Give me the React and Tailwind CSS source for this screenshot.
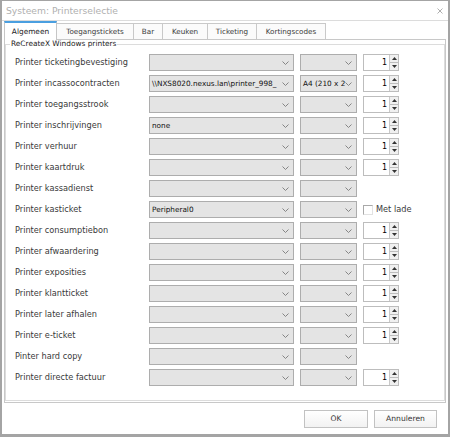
import React from "react";

const rows = [
  { label: "Printer ticketingbevestiging", extra: "spin" },
  { label: "Printer incassocontracten", c1: "\\\\NXS8020.nexus.lan\\printer_998_", c2: "A4 (210 x 2", extra: "spin" },
  { label: "Printer toegangsstrook", extra: "spin" },
  { label: "Printer inschrijvingen", c1: "none", extra: "spin" },
  { label: "Printer verhuur", extra: "spin" },
  { label: "Printer kaartdruk", extra: "spin" },
  { label: "Printer kassadienst" },
  { label: "Printer kasticket", c1: "Peripheral0", extra: "check" },
  { label: "Printer consumptiebon", extra: "spin" },
  { label: "Printer afwaardering", extra: "spin" },
  { label: "Printer exposities", extra: "spin" },
  { label: "Printer klantticket", extra: "spin" },
  { label: "Printer later afhalen", extra: "spin" },
  { label: "Printer e-ticket", extra: "spin" },
  { label: "Pinter hard copy" },
  { label: "Printer directe factuur", extra: "spin" },
];

const tabs = [
  { name: "Toegangstickets", w: "w-[77px]" },
  { name: "Bar", w: "w-[29px]" },
  { name: "Keuken", w: "w-[45px]" },
  { name: "Ticketing", w: "w-[49px]" },
  { name: "Kortingscodes", w: "w-[69px]" },
];

function Chevron() {
  return (
    <svg width="7" height="4" viewBox="0 0 7 4" className="block">
      <polyline points="0.5,0.5 3.5,3.5 6.5,0.5" fill="none" stroke="#858585" strokeWidth="1" />
    </svg>
  );
}

function Combo({ w, text }) {
  return (
    <div className={`${w} h-[17px] shrink-0 border border-[#adadad] bg-[#e4e4e4] flex items-center`}>
      <div className="flex-1 min-w-0 whitespace-nowrap pl-[2px] text-[7.3px] leading-[10px] text-[#111]">
        {text || ""}
      </div>
      <div className="w-[11px] shrink-0 h-full flex items-center justify-start">
        <Chevron />
      </div>
    </div>
  );
}

function Spinner() {
  return (
    <div className="ml-[6px] w-[36px] h-[17px] shrink-0 border border-[#bdbdbd] bg-white flex">
      <div className="flex-1 flex items-center justify-end pr-[2px] text-[8px] leading-none text-black">1</div>
      <div className="w-[9px] flex flex-col border-l border-[#c9c9c9] bg-[#f0f0f0]">
        <div className="flex-1 flex items-center justify-center border-b border-[#bdbdbd]">
          <svg width="5" height="3" viewBox="0 0 5 3" className="block">
            <polygon points="2.5,0 5,3 0,3" fill="#333" />
          </svg>
        </div>
        <div className="flex-1 flex items-center justify-center">
          <svg width="5" height="3" viewBox="0 0 5 3" className="block">
            <polygon points="0,0 5,0 2.5,3" fill="#333" />
          </svg>
        </div>
      </div>
    </div>
  );
}

function Check() {
  return (
    <div className="ml-[6px] flex items-center">
      <div className="w-[10px] h-[10px] border-t border-l border-[#a9a9a9] border-r border-b border-r-[#e2e2e2] border-b-[#e2e2e2] bg-white" />
      <span className="ml-[3px] text-[8.2px] leading-none text-[#3a3a3a]">Met lade</span>
    </div>
  );
}

export default function App() {
  return (
    <div className="w-[450px] h-[437px] box-border bg-white border-l-2 border-r-2 border-t border-b-[3px] border-[#a4a4a4] flex flex-col font-['DejaVu_Sans',sans-serif] overflow-hidden">
      {/* Title bar */}
      <div className="h-[20px] shrink-0 border-b border-[#dcdcdc] flex items-center justify-between pl-[4px] pr-[5px]">
        <span className="text-[9.2px] leading-none text-[#b0b0b0]">Systeem: Printerselectie</span>
        <svg width="6" height="6" viewBox="0 0 6 6" className="block">
          <line x1="0.5" y1="0.5" x2="5.5" y2="5.5" stroke="#999" strokeWidth="0.8" />
          <line x1="5.5" y1="0.5" x2="0.5" y2="5.5" stroke="#999" strokeWidth="0.8" />
        </svg>
      </div>

      <div className="px-[2px] flex flex-col">
        {/* Tabs */}
        <div className="h-[18px] flex items-end">
          <div className="relative z-10 -mb-px w-[53px] h-[19px] box-border border-t-2 border-t-[#4a9fe0] border-l border-r border-[#c6c6c6] bg-white flex items-center justify-center text-[7.4px] leading-none text-[#222]">
            Algemeen
          </div>
          {tabs.map((t) => (
            <div
              key={t.name}
              className={`${t.w} h-[16px] box-border border-t border-r border-[#c9c9c9] bg-[#fbfbfb] flex items-center justify-center text-[7.2px] leading-none text-[#3a3a3a]`}
            >
              {t.name}
            </div>
          ))}
        </div>

        {/* Panel */}
        <div className="h-[364px] box-border border border-[#c8c8c8] pt-[4px] pb-[1px]">
          <div className="relative h-[357px] box-border border border-[#dcdcdc] pt-[7px]">
            <span className="absolute -top-[5px] left-[4px] bg-white px-px text-[7.4px] leading-none text-[#222]">
              ReCreateX Windows printers
            </span>
            {rows.map((r) => (
              <div key={r.label} className="h-[21px] flex items-center pl-[9px]">
                <div className="w-[134px] shrink-0 text-[8.2px] leading-none text-[#3a3a3a] whitespace-nowrap">{r.label}</div>
                <Combo w="w-[145px]" text={r.c1} />
                <div className="ml-[6px]">
                  <Combo w="w-[57px]" text={r.c2} />
                </div>
                {r.extra === "spin" && <Spinner />}
                {r.extra === "check" && <Check />}
              </div>
            ))}
          </div>
        </div>
      </div>

      {/* Buttons */}
      <div className="flex-1 flex items-center justify-end pr-[11px] gap-[6px]">
        <button className="w-[64px] h-[18px] border border-[#c2c2c2] bg-linear-to-b from-white to-[#f2f2f2] text-[7.6px] leading-none text-[#333]">
          OK
        </button>
        <button className="w-[63px] h-[18px] border border-[#c2c2c2] bg-linear-to-b from-white to-[#f2f2f2] text-[7.6px] leading-none text-[#333]">
          Annuleren
        </button>
      </div>
    </div>
  );
}
